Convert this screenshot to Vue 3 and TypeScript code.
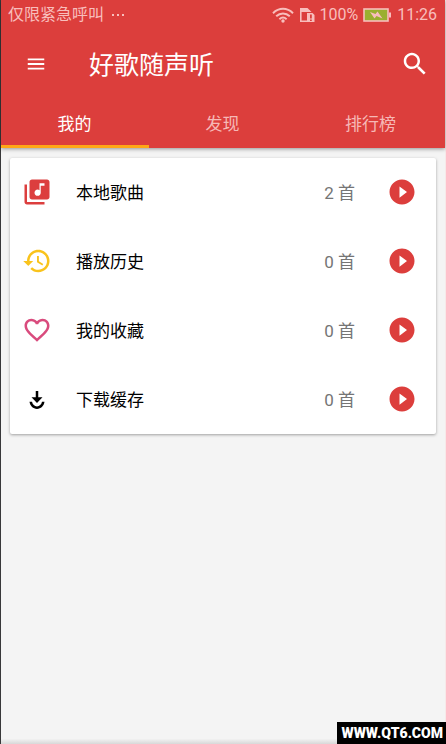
<script setup lang="ts">
import { ref } from 'vue'

interface Entry {
  name: string
  count: number
  color: string
  path: string
}

const tabs: string[] = ['我的', '发现', '排行榜']
const active = ref(0)

const entries: Entry[] = [
  {
    name: '本地歌曲',
    count: 2,
    color: '#dc3e3e',
    path: 'M20 2H8c-1.100 0-2 .9-2 2v12c0 1.100.9 2 2 2h12c1.100 0 2-.9 2-2V4c0-1.100-.9-2-2-2zm-2 5h-3v5.500c0 1.380-1.120 2.500-2.500 2.500S10 13.880 10 12.500s1.120-2.500 2.500-2.500c.57 0 1.080.19 1.500.51V5h4v2zM4 6H2v14c0 1.100.9 2 2 2h14v-2H4V6z',
  },
  {
    name: '播放历史',
    count: 0,
    color: '#f9c31c',
    path: 'M13 3c-4.970 0-9 4.030-9 9H1l3.890 3.890.07.14L9 12H6c0-3.870 3.130-7 7-7s7 3.130 7 7-3.130 7-7 7c-1.930 0-3.680-.79-4.940-2.060l-1.420 1.420C8.270 19.990 10.510 21 13 21c4.970 0 9-4.030 9-9s-4.030-9-9-9zm-1 5v5l4.280 2.540.72-1.210-3.500-2.080V8H12z',
  },
  {
    name: '我的收藏',
    count: 0,
    color: '#d94b7d',
    path: 'M16.500 3c-1.740 0-3.410.81-4.500 2.090C10.910 3.810 9.240 3 7.500 3 4.420 3 2 5.420 2 8.500c0 3.780 3.400 6.860 8.550 11.540L12 21.350l1.450-1.320C18.600 15.360 22 12.280 22 8.500 22 5.420 19.580 3 16.500 3zm-4.400 15.550l-.1.100-.1-.1C7.140 14.240 4 11.390 4 8.500 4 6.500 5.500 5 7.500 5c1.540 0 3.040.99 3.570 2.360h1.870C13.460 5.990 14.960 5 16.500 5c2 0 3.500 1.500 3.500 3.500 0 2.890-3.140 5.740-7.900 10.050z',
  },
  {
    name: '下载缓存',
    count: 0,
    color: '#000000',
    path: 'M11 5.600h2v5h3.400L12 15.200 7.600 10.600H11zM6 14.200h2c.5 2.200 2 3.700 4 3.700s3.500-1.500 4-3.700h2c-.5 3.400-2.900 5.700-6 5.700s-5.500-2.300-6-5.700z',
  },
]
</script>

<template>
  <div class="screen">
    <header class="header">
      <div class="status">
        <span class="carrier">仅限紧急呼叫</span>
        <svg class="dots" viewBox="0 0 14 4" aria-hidden="true">
          <path d="M1 1h2v2H1zM6 1h2v2H6zM11 1h2v2h-2z" />
        </svg>
        <span class="spacer"></span>
        <svg class="wifi" viewBox="0 0 22 16" aria-hidden="true">
          <g fill="none" stroke="currentColor" stroke-width="2">
            <path d="M1 6.200C7 .4 15 .4 21 6.200" />
            <path d="M4.200 9.300c4-3.800 9.600-3.800 13.600 0" />
            <path d="M7.400 12.200c2.200-2 5-2 7.200 0" />
          </g>
          <circle cx="11" cy="14" r="1.700" />
        </svg>
        <svg class="sim" viewBox="0 0 16 16" aria-hidden="true">
          <path d="M8 14.200H1.800V4H11" fill="none" stroke="currentColor" stroke-width="1.600" />
          <path d="M1 1h7.500l4 4H1z" />
          <path fill-rule="evenodd" d="M8 6h5.500L15.500 8v7H8zM11 7.500v4h1.800v-4zm0 5V14h1.800v-1.500z" />
        </svg>
        <span class="percent">100%</span>
        <svg class="battery" viewBox="0 0 28 14" aria-hidden="true">
          <rect x="1" y="1" width="24" height="12" fill="#9aaf2f" stroke="currentColor" stroke-width="1.600" />
          <path d="M26 4.500h2v5h-2z" />
          <path d="M7 4l5.500 2L14.500 3.500l5 7-6-2.500-2 2.500z" />
        </svg>
        <span class="time">11:26</span>
      </div>
      <div class="toolbar">
        <button class="icon-button" type="button" aria-label="菜单">
          <svg class="menu-icon" viewBox="0 0 24 24"><path d="M3 18h18v-2H3v2zm0-5h18v-2H3v2zm0-7v2h18V6H3z" /></svg>
        </button>
        <h1>好歌随声听</h1>
        <button class="icon-button" type="button" aria-label="搜索">
          <svg class="icon" viewBox="0 0 24 24">
            <path d="M15.500 14h-.79l-.28-.27C15.410 12.590 16 11.110 16 9.500 16 5.910 13.090 3 9.500 3S3 5.910 3 9.500 5.910 16 9.500 16c1.610 0 3.090-.59 4.230-1.570l.27.28v.79l5 4.990L20.490 19l-4.990-5zm-6 0C7.010 14 5 11.990 5 9.500S7.010 5 9.500 5 14 7.010 14 9.500 11.990 14 9.500 14z" />
          </svg>
        </button>
      </div>
      <nav class="tabs" role="tablist">
        <button
          v-for="(tab, i) in tabs"
          :key="tab"
          type="button"
          role="tab"
          class="tab"
          :class="{ active: active === i }"
          :aria-selected="active === i"
          @click="active = i"
        >{{ tab }}</button>
      </nav>
    </header>

    <main class="content">
      <ul class="card">
        <li v-for="entry in entries" :key="entry.name" class="row">
          <svg class="icon" viewBox="0 0 24 24" :style="{ color: entry.color }" aria-hidden="true">
            <path :d="entry.path" />
          </svg>
          <span class="name">{{ entry.name }}</span>
          <span class="count">{{ entry.count }} 首</span>
          <button class="icon-button play" type="button" :aria-label="'播放' + entry.name">
            <svg class="icon" viewBox="0 0 24 24">
              <path d="M12 2C6.480 2 2 6.480 2 12s4.480 10 10 10 10-4.480 10-10S17.520 2 12 2zm-2 14.500v-9l6 4.500-6 4.500z" />
            </svg>
          </button>
        </li>
      </ul>
    </main>

    <footer class="footer"><span class="site">WWW.QT6.COM</span></footer>
  </div>
</template>

<style>
body {
  margin: 0;
}
</style>

<style scoped>
.screen {
  display: flex;
  flex-direction: column;
  box-sizing: border-box;
  min-height: 100vh;
  border-left: 1px solid #38383a;
  border-right: 1px solid #f7e9e9;
  background: #f4f4f4;
  font-family: Roboto, "Noto Sans CJK SC", sans-serif;
  font-size: 17px;
}

svg {
  display: block;
  flex: none;
  fill: currentColor;
}

.header {
  background: #dc3e3c;
  color: #ffffff;
  box-shadow: 0 1px 4px rgba(0, 0, 0, 0.4);
}

.status {
  display: flex;
  align-items: center;
  height: 30px;
  padding: 0 8px 0 7px;
  font-size: 16px;
  line-height: 20px;
  color: #f8bebc;
}

.spacer {
  flex: 1;
}

.dots {
  width: 14px;
  height: 4px;
  margin-left: 7px;
}

.wifi {
  width: 22px;
  height: 16px;
  margin-right: 5px;
}

.sim {
  width: 16px;
  height: 16px;
  margin-right: 4px;
}

.battery {
  width: 28px;
  height: 14px;
  margin: 0 6px 0 5px;
}

.toolbar {
  display: flex;
  align-items: center;
  height: 68px;
  padding: 0 15px 0 24px;
}

.toolbar h1 {
  flex: 1;
  margin: 0 0 0 42px;
  padding-top: 4px;
  font-size: 25px;
  font-weight: 400;
  line-height: 32px;
}

.icon-button {
  padding: 0;
  border: 0;
  background: none;
  color: inherit;
  cursor: pointer;
}

.icon {
  width: 30px;
  height: 30px;
}

.menu-icon {
  width: 22px;
  height: 22px;
}

.tabs {
  display: grid;
  grid-template-columns: repeat(3, 1fr);
}

.tab {
  height: 50px;
  padding: 2px 1px 0 0;
  border: 0;
  border-bottom: 3px solid transparent;
  background: none;
  color: #f6b8b6;
  font: inherit;
  cursor: pointer;
}

.tab.active {
  border-bottom-color: #ffa716;
  color: #ffffff;
}

.content {
  flex: 1;
  padding: 10px 9px;
}

.card {
  margin: 0;
  padding: 0;
  list-style: none;
  border-radius: 2px;
  background: #ffffff;
  box-shadow: 0 1px 3px rgba(0, 0, 0, 0.35);
}

.row {
  display: flex;
  align-items: center;
  box-sizing: border-box;
  height: 69px;
  padding: 0 19px 2px 12px;
}

.name {
  flex: 1;
  margin-left: 24px;
  color: #000000;
}

.count {
  margin-right: 32px;
  color: #757575;
}

.play {
  color: #dc3e3c;
}

.footer {
  display: flex;
  justify-content: flex-end;
  margin-right: -1px;
  background: linear-gradient(to bottom, #f4f4f4 75%, #d8d8d8);
}

.site {
  padding: 0 3px 0 4px;
  background: #000000;
  color: #ffffff;
  font-size: 14px;
  font-weight: 900;
  line-height: 22px;
}
</style>
